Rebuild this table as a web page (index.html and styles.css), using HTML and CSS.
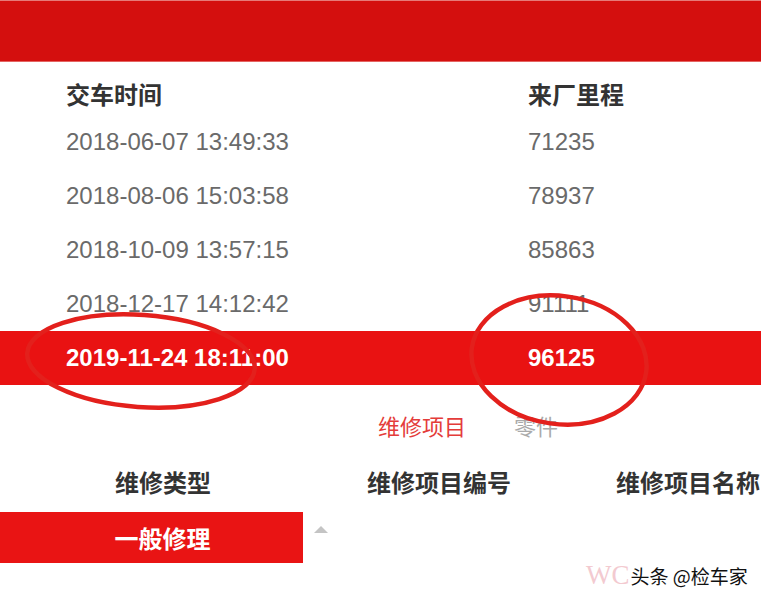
FILE: index.html
```html
<!DOCTYPE html>
<html lang="zh-CN">
<head>
    <meta charset="UTF-8">
    <meta name="viewport" content="width=device-width, initial-scale=1.0">
    <title>维修记录</title>
    <link rel="stylesheet" href="styles.css">
</head>
<body>

<div class="page">
    <div class="topbar"></div>

    <div class="records">
        <div class="rec rec-head">
            <span>交车时间</span>
            <span>来厂里程</span>
        </div>
        <div class="rec">
            <span>2018-06-07 13:49:33</span>
            <span>71235</span>
        </div>
        <div class="rec">
            <span>2018-08-06 15:03:58</span>
            <span>78937</span>
        </div>
        <div class="rec">
            <span>2018-10-09 13:57:15</span>
            <span>85863</span>
        </div>
        <div class="rec">
            <span>2018-12-17 14:12:42</span>
            <span>91111</span>
        </div>
        <div class="rec rec-active">
            <span>2019-11-24 18:11:00</span>
            <span>96125</span>
        </div>
    </div>

    <div class="tabs">
        <span class="tab tab-on">维修项目</span>
        <span class="tab">零件</span>
    </div>

    <div class="repair-head">
        <span>维修类型</span>
        <span>维修项目编号</span>
        <span class="col-name">维修项目名称</span>
    </div>

    <div class="repair-row">
        <div class="repair-type">一般修理</div>
        <span class="caret"></span>
    </div>

    <!-- hand drawn circles over the screenshot -->
    <svg class="marks" width="761" height="605" viewBox="0 0 761 605">
        <ellipse cx="141" cy="361" rx="114" ry="46" transform="rotate(4 141 361)"></ellipse>
        <ellipse cx="559" cy="360" rx="88" ry="64" transform="rotate(8 559 360)"></ellipse>
    </svg>

    <div class="credit">
        <span class="credit-bg">WC</span>
        <span class="credit-text">头条 @检车家</span>
    </div>
</div>

</body>
</html>
```

FILE: styles.css
```css
body {
    margin: 0;
    padding: 0;
    background: #fff;
    font-family: "Liberation Sans", "Noto Sans CJK SC", sans-serif;
    overflow: hidden;
}
.page {
    position: relative;
    width: 761px;
    height: 605px;
    overflow: hidden;
}
.topbar {
    height: 60px;
    background-color: #d40f0e;
    border-top: 1px solid #e67a78;
    border-bottom: 1px solid #e46462;
}
.records {
    margin-top: 11px;
}
.rec {
    display: grid;
    grid-template-columns: 462px 1fr;
    padding-left: 66px;
    height: 54px;
    line-height: 54px;
    font-size: 24px;
    color: #6a6a6a;
}
.rec-head {
    height: 42px;
    line-height: 42px;
    color: #333;
    font-weight: bold;
    font-family: "Noto Sans CJK SC", sans-serif;
}
.rec-active {
    background-color: #e91212;
    color: #fff;
    font-weight: bold;
}
.tabs {
    display: flex;
    gap: 48px;
    margin-top: 20px;
    padding-left: 378px;
    height: 40px;
    line-height: 40px;
    font-size: 22px;
    font-family: "Noto Sans CJK SC", sans-serif;
}
.tab {
    color: #aaa;
}
.tab-on {
    color: #e43c3a;
}
.repair-head {
    display: grid;
    grid-template-columns: 326px 226px 1fr;
    margin-top: 17px;
    height: 40px;
    line-height: 40px;
    font-size: 24px;
    font-weight: bold;
    color: #333;
    font-family: "Noto Sans CJK SC", sans-serif;
    text-align: center;
}
.repair-head .col-name {
    text-align: left;
    padding-left: 64px;
    white-space: nowrap;
}
.repair-row {
    display: flex;
    align-items: flex-start;
    margin-top: 10px;
}
.repair-type {
    width: 303px;
    height: 51px;
    line-height: 51px;
    padding-left: 22px;
    box-sizing: border-box;
    text-align: center;
    background-color: #e91414;
    color: #fff;
    font-size: 24px;
    font-weight: bold;
    font-family: "Noto Sans CJK SC", sans-serif;
}
.caret {
    width: 0;
    height: 0;
    margin: 14px 0 0 11px;
    border-left: 7px solid transparent;
    border-right: 7px solid transparent;
    border-bottom: 7px solid #c4c4c4;
}
.marks {
    position: absolute;
    top: 0;
    left: 0;
    pointer-events: none;
}
.marks ellipse {
    fill: none;
    stroke: #e3201c;
    stroke-width: 4.5;
}
.credit {
    position: absolute;
    left: 586px;
    top: 560px;
    display: flex;
    align-items: center;
    gap: 1px;
}
.credit-bg {
    font-family: "Liberation Serif", serif;
    font-size: 27px;
    color: #f3cad0;
}
.credit-text {
    font-family: "Noto Sans CJK SC", sans-serif;
    font-size: 19px;
    color: #111;
    white-space: nowrap;
    text-shadow: 1px 0 0 #fff, -1px 0 0 #fff, 0 1px 0 #fff, 0 -1px 0 #fff;
}
```
